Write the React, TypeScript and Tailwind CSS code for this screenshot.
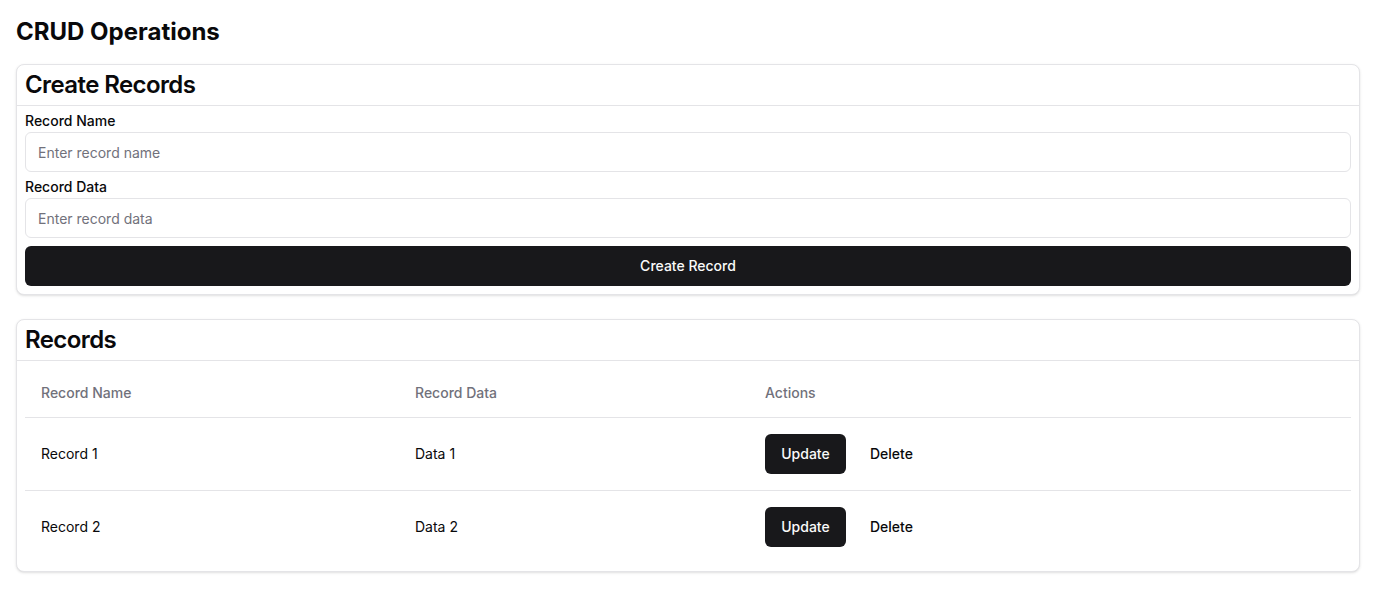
import { useState } from "react";

interface RecordItem {
  id: number;
  name: string;
  data: string;
}

const initialRecords: RecordItem[] = [
  { id: 1, name: "Record 1", data: "Data 1" },
  { id: 2, name: "Record 2", data: "Data 2" },
];

export default function App() {
  const [records, setRecords] = useState<RecordItem[]>(initialRecords);
  const [name, setName] = useState("");
  const [data, setData] = useState("");

  const createRecord = () => {
    if (!name) return;
    setRecords([...records, { id: Date.now(), name, data }]);
    setName("");
    setData("");
  };

  return (
    <div className="p-4 bg-white text-zinc-950 font-['Inter',sans-serif] min-h-[612px]">
      <h1 className="text-2xl font-bold mb-4">CRUD Operations</h1>

      {/* ─── Create ─────────────────────────────── */}
      <div className="rounded-lg border border-zinc-200 bg-white shadow-sm">
        <div className="px-2 py-1 border-b border-zinc-200">
          <h2 className="text-2xl font-semibold tracking-tight">Create Records</h2>
        </div>
        <div className="px-2 pt-[5px] pb-2">
          <label className="block text-sm font-medium leading-5 mb-px">Record Name</label>
          <input
            value={name}
            onChange={(e) => setName(e.target.value)}
            placeholder="Enter record name"
            className="h-10 w-full rounded-md border border-zinc-200 px-3 text-sm placeholder:text-zinc-500 outline-none"
          />
          <label className="block text-sm font-medium leading-5 mt-[5px] mb-px">Record Data</label>
          <input
            value={data}
            onChange={(e) => setData(e.target.value)}
            placeholder="Enter record data"
            className="h-10 w-full rounded-md border border-zinc-200 px-3 text-sm placeholder:text-zinc-500 outline-none"
          />
          <button
            onClick={createRecord}
            className="mt-2 h-10 w-full rounded-md bg-zinc-900 text-sm font-medium text-zinc-50"
          >
            Create Record
          </button>
        </div>
      </div>

      {/* ─── Records ────────────────────────────── */}
      <div className="mt-6 rounded-lg border border-zinc-200 bg-white shadow-sm">
        <div className="px-2 py-1 border-b border-zinc-200">
          <h2 className="text-2xl font-semibold tracking-tight">Records</h2>
        </div>
        <div className="p-2">
          <table className="w-full text-sm text-left">
            <thead>
              <tr className="border-b border-zinc-200">
                <th className="h-12 px-4 w-[374px] font-medium text-zinc-500">Record Name</th>
                <th className="h-12 px-4 w-[350px] font-medium text-zinc-500">Record Data</th>
                <th className="h-12 px-4 font-medium text-zinc-500">Actions</th>
              </tr>
            </thead>
            <tbody>
              {records.map((r, i) => (
                <tr
                  key={r.id}
                  className={i < records.length - 1 ? "border-b border-zinc-200" : ""}
                >
                  <td className="p-4">{r.name}</td>
                  <td className="p-4">{r.data}</td>
                  <td className="p-4">
                    <div className="flex items-center gap-2">
                      <button className="h-10 w-[81px] rounded-md bg-zinc-900 text-sm font-medium text-zinc-50">
                        Update
                      </button>
                      <button
                        onClick={() => setRecords(records.filter((x) => x.id !== r.id))}
                        className="h-10 px-4 rounded-md text-sm font-medium"
                      >
                        Delete
                      </button>
                    </div>
                  </td>
                </tr>
              ))}
            </tbody>
          </table>
        </div>
      </div>
    </div>
  );
}
